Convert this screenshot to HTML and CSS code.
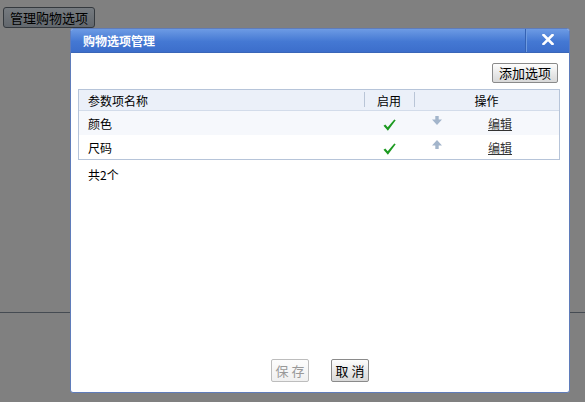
FILE: index.html
```html
<!DOCTYPE html>
<html lang="zh">
<head>
<meta charset="utf-8">
<title>购物选项管理</title>
<link rel="stylesheet" href="styles.css">
</head>
<body>
<div class="page">
  <button class="page-btn" type="button">管理购物选项</button>
  <div class="page-rule"></div>
</div>

<div class="dialog">
  <div class="dlg-head">
    <div class="dlg-title">购物选项管理</div>
    <div class="dlg-close">
      <svg width="12" height="11" viewBox="0 0 12 11"><path d="M1.5 1 L10.5 10 M10.5 1 L1.5 10" stroke="#fff" stroke-width="2.6" stroke-linecap="square" fill="none"/></svg>
    </div>
  </div>
  <div class="dlg-body">
    <div class="toolbar">
      <button class="btn add" type="button">添加选项</button>
    </div>
    <div class="grid">
      <div class="row head">
        <div class="c1">参数项名称</div>
        <div class="c2"><span class="sep"></span>启用</div>
        <div class="c3 center"><span class="sep"></span>操作</div>
      </div>
      <div class="row alt">
        <div class="c1">颜色</div>
        <div class="c2"><svg class="check" width="13" height="12" viewBox="0 0 13 12"><path d="M0.5 6.8 L2.3 5.5 L4.7 8.2 L11.3 0.4 L12.7 1.3 L4.9 11.7 Z" fill="#1d9a21"/></svg></div>
        <div class="c3"><span class="arrow"><svg width="10" height="9" viewBox="0 0 10 9"><path d="M3.3 0 H6.7 V3.5 H10 L5 9 L0 3.5 H3.3 Z" fill="#a3b5cb"/></svg></span><a class="edit" href="#">编辑</a></div>
      </div>
      <div class="row">
        <div class="c1">尺码</div>
        <div class="c2"><svg class="check" width="13" height="12" viewBox="0 0 13 12"><path d="M0.5 6.8 L2.3 5.5 L4.7 8.2 L11.3 0.4 L12.7 1.3 L4.9 11.7 Z" fill="#1d9a21"/></svg></div>
        <div class="c3"><span class="arrow"><svg width="10" height="9" viewBox="0 0 10 9"><path d="M5 0 L10 5.5 H6.7 V9 H3.3 V5.5 H0 Z" fill="#a3b5cb"/></svg></span><a class="edit" href="#">编辑</a></div>
      </div>
    </div>
    <div class="total">共2个</div>
  </div>
  <div class="dlg-foot">
    <button class="btn disabled" type="button" disabled>保 存</button>
    <button class="btn" type="button">取 消</button>
  </div>
</div>
</body>
</html>
```

FILE: styles.css
```css
html, body {
  margin: 0;
  padding: 0;
  height: 100%;
}
body {
  background: #808080;
  font-family: "Noto Sans CJK SC", "Liberation Sans", sans-serif;
  font-size: 12px;
  color: #000;
  overflow: hidden;
}
.page {
  padding: 7px 0 0 3px;
}
.page-btn {
  display: block;
  height: 21px;
  width: 92px;
  padding: 0;
  margin: 0;
  border: 1px solid #34393e;
  border-radius: 3px;
  background: linear-gradient(#767b80, #62676d);
  font-family: inherit;
  font-size: 13px;
  line-height: 19px;
  color: #000;
}
.page-rule {
  height: 284px;
  margin-left: -3px;
  border-bottom: 1px solid #454b52;
}
.dialog {
  position: absolute;
  left: 70px;
  top: 28px;
  width: 498px;
  height: 363px;
  border: 1px solid #5f7cba;
  border-radius: 3px;
  background: #fff;
  display: flex;
  flex-direction: column;
  overflow: hidden;
}
.dlg-head {
  height: 23px;
  flex: none;
  display: flex;
  background: linear-gradient(#6d9be4, #4478d3 55%, #3c6ecb);
  border-bottom: 1px solid #3a66b8;
}
.dlg-title {
  flex: 1;
  color: #fff;
  font-weight: bold;
  font-size: 12px;
  line-height: 23px;
  padding-left: 12px;
}
.dlg-close {
  width: 43px;
  display: flex;
  align-items: center;
  justify-content: center;
  border-left: 1px solid #3562b3;
  box-shadow: inset 1px 0 0 #6f9be0;
  padding-bottom: 2px;
}
.dlg-body {
  flex: 1;
  padding: 10px 9px 0 7px;
}
.toolbar {
  display: flex;
  justify-content: flex-end;
  padding-right: 2px;
  margin-bottom: 6px;
}
.btn {
  height: 20px;
  padding: 0 5px;
  margin: 0;
  border: 1px solid #8a8a8a;
  border-radius: 2px;
  background: linear-gradient(#fdfdfd, #e6e6e6 60%, #d9d9d9);
  font-family: inherit;
  font-size: 13px;
  line-height: 18px;
  color: #000;
}
.btn.add {
  width: 66px;
  padding: 0;
}
.grid {
  border: 1px solid #b6c4d9;
}
.row {
  display: grid;
  grid-template-columns: 285px 50px 1fr;
  height: 24px;
  align-items: center;
}
.row.head {
  height: 20px;
  background: #ebf0f9;
  border-bottom: 1px solid #d3dcea;
}
.row.alt {
  background: #f6f8fc;
}
.c1 {
  padding-left: 9px;
}
.c2, .c3 {
  position: relative;
  height: 100%;
  display: flex;
  align-items: center;
}
.c2 {
  justify-content: center;
}
.c3.center {
  justify-content: center;
}
.sep {
  position: absolute;
  left: 0;
  top: 2px;
  bottom: 3px;
  width: 1px;
  background: #b9c5d7;
}
.check {
  margin-top: 4px;
}
.arrow {
  width: 46px;
  display: flex;
  justify-content: center;
  margin-top: -5px;
}
.edit {
  margin-left: 28px;
  color: #333;
  text-decoration: underline;
}
.total {
  padding: 6px 0 0 10px;
}
.dlg-foot {
  flex: none;
  display: flex;
  justify-content: center;
  gap: 22px;
  padding-bottom: 10px;
}
.dlg-foot .btn {
  width: 38px;
  height: 23px;
  padding: 0;
}
.btn.disabled {
  color: #999;
  border-color: #bdbdbd;
  background: linear-gradient(#fdfdfd, #f0f0f0);
}
```
